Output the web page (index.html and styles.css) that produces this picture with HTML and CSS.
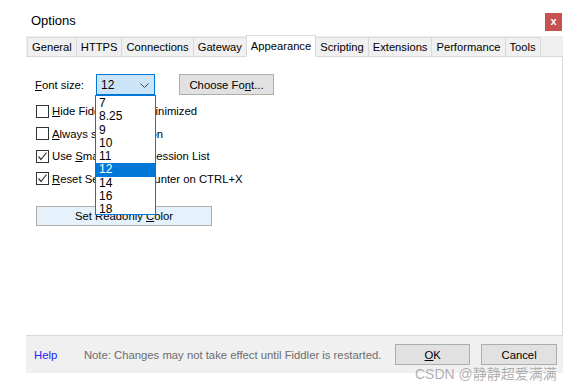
FILE: index.html
```html
<!DOCTYPE html>
<html>
<head>
<meta charset="utf-8">
<link rel="stylesheet" href="styles.css">
</head>
<body>
<div class="window">
  <div class="titlebar">
    <span class="title">Options</span>
    <span class="close">x</span>
  </div>
  <div class="tabs">
    <span class="tab">General</span>
    <span class="tab">HTTPS</span>
    <span class="tab">Connections</span>
    <span class="tab">Gateway</span>
    <span class="tab active">Appearance</span>
    <span class="tab">Scripting</span>
    <span class="tab">Extensions</span>
    <span class="tab">Performance</span>
    <span class="tab">Tools</span>
  </div>
  <div class="panel">
    <div class="fontrow">
      <span class="label"><u>F</u>ont size:</span>
      <div class="combo-wrap">
        <div class="combo">
          <span>12</span>
          <svg class="chev" width="9" height="6" viewBox="0 0 9 6"><path d="M0.5 0.5 L4.5 4.5 L8.5 0.5" fill="none" stroke="#444" stroke-width="1"/></svg>
        </div>
        <ul class="list">
          <li>7</li>
          <li>8.25</li>
          <li>9</li>
          <li>10</li>
          <li>11</li>
          <li class="sel">12</li>
          <li>14</li>
          <li>16</li>
          <li>18</li>
        </ul>
      </div>
      <span class="btn choose"><span>Choose Fo<u>n</u>t...</span></span>
    </div>
    <div class="checks">
      <div class="check"><span class="box"></span><span><u>H</u>ide Fiddler when minimized</span></div>
      <div class="check"><span class="box"></span><span><u>A</u>lways show tray icon</span></div>
      <div class="check"><span class="box checked"><svg width="11" height="11" viewBox="0 0 11 11"><path d="M1.5 5.5 L4 8.5 L9.5 1.5" fill="none" stroke="#333" stroke-width="1.2"/></svg></span><span>Use <u>S</u>martScroll in Session List</span></div>
      <div class="check"><span class="box checked"><svg width="11" height="11" viewBox="0 0 11 11"><path d="M1.5 5.5 L4 8.5 L9.5 1.5" fill="none" stroke="#333" stroke-width="1.2"/></svg></span><span><u>R</u>eset Session ID counter on CTRL+X</span></div>
    </div>
    <span class="btn readonly"><span>Set Readonly <u>C</u>olor</span></span>
  </div>
  <div class="footer">
    <span class="help">Help</span>
    <span class="note">Note: Changes may not take effect until Fiddler is restarted.</span>
    <span class="btn ok"><span><u>O</u>K</span></span>
    <span class="btn cancel"><span>Cancel</span></span>
  </div>
</div>
<div class="watermark">CSDN @静静超爱满满</div>
</body>
</html>
```
FILE: styles.css
```css
* { box-sizing: border-box; }
html, body { margin: 0; padding: 0; background: #fff; }
body {
  width: 574px; height: 388px; overflow: hidden; position: relative;
  font-family: "Liberation Sans", Arial, sans-serif; font-size: 11.3px; color: #000;
}
.window { margin-left: 26px; width: 537px; }
.titlebar {
  height: 36px; display: flex; justify-content: space-between; align-items: flex-start;
}
.title { font-size: 13px; padding: 13px 0 0 5px; }
.close {
  margin-top: 13px; margin-right: 1px; width: 17px; height: 18px; background: #c75050;
  color: #fff; font-size: 11px; font-weight: bold; display: flex; align-items: center; justify-content: center;
  padding-bottom: 2px;
}
.tabs {
  height: 21px; background: #f0f0f0; display: flex; align-items: flex-end;
  border-bottom: 1px solid #d9d9d9; padding-left: 1px;
}
.tab {
  height: 20px; margin-bottom: -1px; padding: 2px 4px 0; border: 1px solid #d9d9d9; border-left: none;
  border-bottom: 1px solid #d9d9d9; background: #f0f0f0; white-space: nowrap; line-height: 15px;
  font-size: 11.2px;
}
.tab:first-child { border-left: 1px solid #d9d9d9; }
.tab.active {
  height: 22px; background: #fff; border-bottom-color: #fff; border-left: 1px solid #d9d9d9; margin-left: -1px;
  padding-top: 3px; line-height: 14px;
}
.panel {
  height: 278px; background: #fff; border-right: 1px solid #d9d9d9; padding: 17px 0 0 9px;
}
.fontrow { display: flex; align-items: center; height: 21px; }
.label { width: 61px; }
.combo-wrap { position: relative; width: 59px; margin-right: 24px; }
.combo {
  height: 21px; background: #cce4f7; border: 1px solid #0078d7; display: flex; align-items: center;
  justify-content: space-between; padding: 1px 5px 0 4px; font-size: 12px;
}
.chev { margin-top: 1px; }
.list {
  position: absolute; left: -1px; top: 21px; width: 61px; height: 120px; margin: 0; padding: 1px 0 0;
  list-style: none; background: #fff; border: 1px solid #0078d7; z-index: 5; font-size: 12px;
}
.list li { height: 13.3px; line-height: 13px; padding-left: 3px; }
.list li.sel { background: #0078d7; color: #fff; }
.btn {
  display: inline-flex; align-items: center; justify-content: center; background: #e1e1e1;
  border: 1px solid #adadad; white-space: nowrap;
}
.choose { width: 95px; height: 21px; }
.checks { margin-top: 5px; display: flex; flex-direction: column; }
.check { height: 22.5px; display: flex; align-items: center; padding-left: 1px; }
.box {
  width: 13px; height: 13px; border: 1px solid #333; margin-right: 3px; display: flex;
  align-items: center; justify-content: center; background: #fff;
}
.readonly { margin: 16px 0 0 1px; width: 176px; height: 20px; background: #e5f1fb; }
.footer {
  height: 38px; background: #f0f0f0; border-top: 1px solid #d9d9d9; display: flex; align-items: center;
  padding: 0 6px 0 8px;
}
.help { color: #2222ff; width: 50px; }
.note { color: #6d6d6d; width: 312px; white-space: nowrap; }
.ok { width: 75px; height: 21px; margin-right: 11px; }
.cancel { width: 76px; height: 21px; }
.watermark {
  position: absolute; left: 415px; top: 363px; font-size: 14px; color: rgba(150,150,150,0.75);
  font-family: "Liberation Sans", "Noto Sans CJK SC", sans-serif; white-space: nowrap;
}
```
